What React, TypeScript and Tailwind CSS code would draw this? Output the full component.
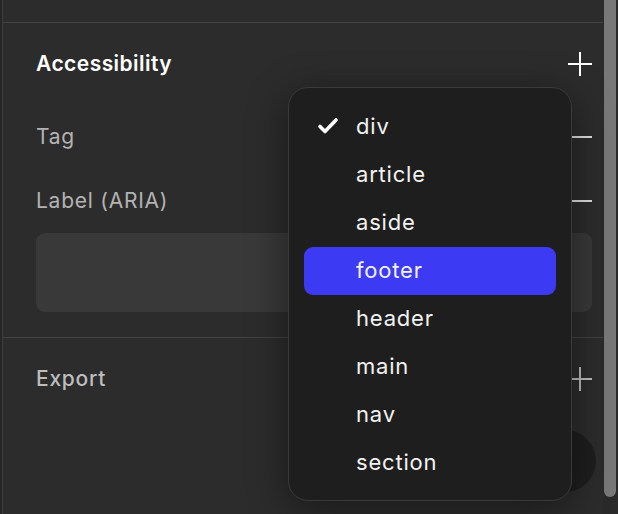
import { useState } from "react";

const tags = ["div", "article", "aside", "footer", "header", "main", "nav", "section"];

function PlusIcon({ className }: { className?: string }) {
  return (
    <svg width="24" height="24" viewBox="0 0 24 24" className={className} fill="none" stroke="currentColor" strokeWidth="2">
      <path d="M12 0v24M0 12h24" />
    </svg>
  );
}

function MinusIcon({ className }: { className?: string }) {
  return (
    <svg width="24" height="24" viewBox="0 0 24 24" className={className} fill="none" stroke="currentColor" strokeWidth="2">
      <path d="M0 12h24" />
    </svg>
  );
}

function Check() {
  return (
    <svg width="22" height="22" viewBox="0 0 22 22" fill="none" stroke="currentColor" strokeWidth="3.6" strokeLinecap="round" strokeLinejoin="round">
      <path d="M3 11.5l5 5L19 5" />
    </svg>
  );
}

function TagMenu() {
  const [selected] = useState("div");
  const [hover, setHover] = useState("footer");
  return (
    <div className="absolute left-[288px] top-[87px] w-[284px] h-[414px] rounded-[20px] bg-[#1e1e1e] border border-[#3a3a3a] shadow-[0_8px_40px_rgba(0,0,0,0.45)] pt-[15px] px-[15px] z-10">
      {tags.map((t) => (
        <div
          key={t}
          onMouseEnter={() => setHover(t)}
          className={
            "relative h-[48px] flex items-center pl-[52px] rounded-[9px] text-[22px] tracking-[0.8px] text-[#f2f2f2] cursor-default " +
            (hover === t ? "bg-[#3d3af4]" : "")
          }
        >
          {selected === t && (
            <span className="absolute left-[13px] top-[12px] text-white">
              <Check />
            </span>
          )}
          <span className="-mt-[1px]">{t}</span>
        </div>
      ))}
    </div>
  );
}

export default function App() {
  return (
    <div
      className="relative w-[618px] h-[514px] overflow-hidden flex bg-[#2c2c2c]"
      style={{ fontFamily: "Inter, 'Noto Sans', sans-serif" }}
    >
      <div className="w-[2px] bg-[#262626]" />
      <div className="w-[1px] bg-[#3d3d3d]" />

      <div className="w-[600px] flex flex-col">
        <div className="h-[22px] border-b border-[#424242] box-content" />

        <div className="pl-[33px] pr-[11px] pb-[25px] border-b border-[#424242]">
          <div className="h-[82px] flex items-center justify-between">
            <span className="text-[21px] font-semibold text-white tracking-[0.45px]">Accessibility</span>
            <PlusIcon className="text-white" />
          </div>
          <div className="h-[64px] flex items-center justify-between">
            <span className="text-[21px] tracking-[0.75px] text-[#b3b3b3]">Tag</span>
            <MinusIcon className="text-[#e0e0e0]" />
          </div>
          <div className="h-[64px] flex items-center justify-between">
            <span className="text-[21px] tracking-[0.75px] text-[#b3b3b3]">Label (ARIA)</span>
            <MinusIcon className="text-[#e0e0e0]" />
          </div>
          <div className="h-[79px] rounded-[9px] bg-[#393939]" />
        </div>

        <div className="pl-[33px] pr-[11px]">
          <div className="h-[82px] flex items-center justify-between">
            <span className="text-[21px] font-medium tracking-[0.75px] text-[#bdbdbd]">Export</span>
            <PlusIcon className="text-[#bdbdbd]" />
          </div>
        </div>
      </div>

      <div className="w-[15px] pl-[1px] bg-[#2a2a2a]">
        <div className="w-[12px] h-[497px] rounded-b-full bg-[#787878]" />
      </div>

      <div className="absolute left-[534px] top-[430px] w-[62px] h-[62px] rounded-full bg-[#1e1e1e]" />

      <TagMenu />
    </div>
  );
}
